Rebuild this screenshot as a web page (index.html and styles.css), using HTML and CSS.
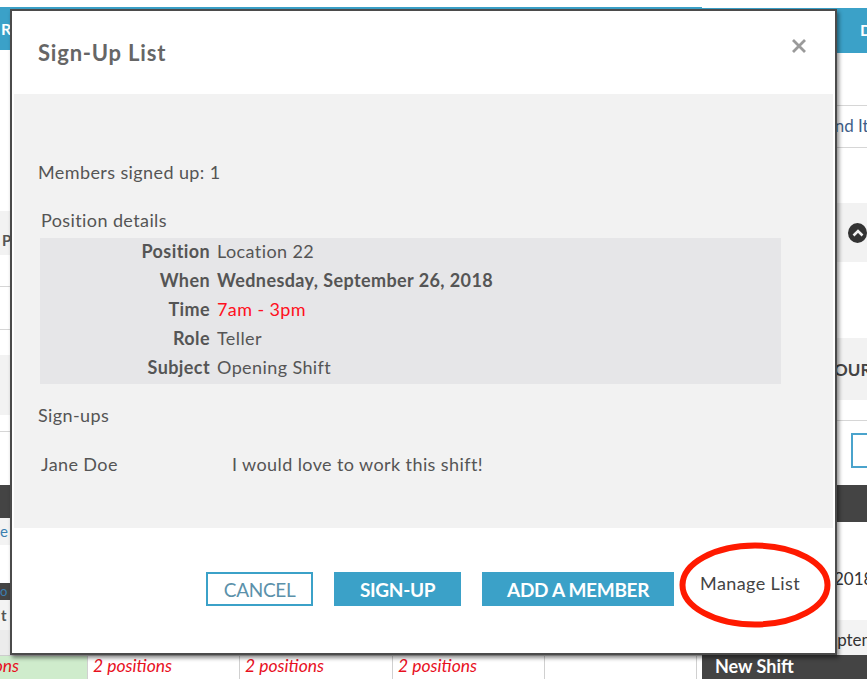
FILE: index.html
```html
<!DOCTYPE html>
<html lang="en">
<head>
<meta charset="utf-8">
<title>Sign-Up List</title>
<link rel="stylesheet" href="styles.css">
</head>
<body>
<div class="page">
  <div class="main">
    <div class="band white h7"></div>
    <div class="band topbar h43"><span class="tb-text">R</span></div>
    <div class="band white h161"></div>
    <div class="band grey h44 txt-dark">P</div>
    <div class="band white h31 line"></div>
    <div class="band white h42 line"></div>
    <div class="band white h25"></div>
    <div class="band grey h60"></div>
    <div class="band white h16 line"></div>
    <div class="band white h53"></div>
    <div class="band dark h33"></div>
    <div class="band light h27 txt-blue">e</div>
    <div class="band white h38"></div>
    <div class="band dark h17 txt-blue small">o</div>
    <div class="band light h30 txt-dark">t</div>
    <div class="band greyish h25"></div>
    <div class="calendar">
      <div class="cal-cell green">2 positions</div>
      <div class="cal-cell">2 positions</div>
      <div class="cal-cell">2 positions</div>
      <div class="cal-cell">2 positions</div>
      <div class="cal-cell"></div>
    </div>
  </div>
  <div class="side">
    <div class="band white h8"></div>
    <div class="band topbar h45"><span class="tb-right">D</span></div>
    <div class="band white h52 line"></div>
    <div class="band white h41 line side-text">Find Items</div>
    <div class="band white h55"></div>
    <div class="band grey h59 icon-row"><span class="circle-icon"><svg width="12" height="8" viewBox="0 0 12 8"><path d="M1.5 6.5 L6 2 L10.5 6.5" fill="none" stroke="#f2f2f2" stroke-width="2.6"/></svg></span></div>
    <div class="band white h76"></div>
    <div class="band grey h62 side-text bold">HOURS</div>
    <div class="band white h20 line"></div>
    <div class="band white h64 input-row"><span class="input-box"></span></div>
    <div class="band dark h37"></div>
    <div class="band white h98 side-date">Sep 26, 2018</div>
    <div class="band light h35 side-sept">September</div>
    <div class="band dark h24 new-shift">New Shift</div>
  </div>
</div>

<div class="modal">
  <div class="modal-header">
    <h2 class="modal-title">Sign-Up List</h2>
    <span class="close"><svg width="16" height="16" viewBox="0 0 16 16"><path d="M2 2 L14 14 M14 2 L2 14" stroke="#9a9a9a" stroke-width="2.8" fill="none"/></svg></span>
  </div>
  <div class="modal-body">
    <p class="count">Members signed up: 1</p>
    <p class="section-title indent">Position details</p>
    <div class="details">
      <div class="d-row"><span class="d-label">Position</span><span class="d-value">Location 22</span></div>
      <div class="d-row"><span class="d-label">When</span><span class="d-value strong">Wednesday, September 26, 2018</span></div>
      <div class="d-row"><span class="d-label">Time</span><span class="d-value red">7am - 3pm</span></div>
      <div class="d-row"><span class="d-label">Role</span><span class="d-value">Teller</span></div>
      <div class="d-row"><span class="d-label">Subject</span><span class="d-value">Opening Shift</span></div>
    </div>
    <p class="section-title signups">Sign-ups</p>
    <div class="signup-row"><span class="su-name">Jane Doe</span><span class="su-msg">I would love to work this shift!</span></div>
  </div>
  <div class="modal-footer">
    <button class="btn btn-outline">CANCEL</button>
    <button class="btn btn-solid">SIGN-UP</button>
    <button class="btn btn-solid wide">ADD A MEMBER</button>
    <a class="manage">Manage List</a>
  </div>
</div>

<svg class="annotation" width="160" height="92" viewBox="0 0 160 92"><ellipse cx="79" cy="46" rx="72.5" ry="39.5" fill="none" stroke="#ff1a00" stroke-width="6"/></svg>
</body>
</html>
```

FILE: styles.css
```css
* { box-sizing: border-box; }
html, body { margin: 0; padding: 0; }
body {
  width: 867px;
  height: 679px;
  overflow: hidden;
  position: relative;
  font-family: Lato, "Open Sans", sans-serif;
  color: #555;
  background: #fff;
}

.page {
  display: grid;
  grid-template-columns: 702px 165px;
  height: 679px;
}
.main, .side { display: flex; flex-direction: column; overflow: hidden; }

.band { flex: none; font-size: 15px; white-space: nowrap; }
.white { background: #fff; }
.grey { background: #f2f2f2; }
.greyish { background: #ececec; }
.light { background: #f3f3f3; }
.dark { background: #444; }
.topbar { background: #3ba1c8; color: #fff; font-weight: 700; font-size: 16px; }
.line { border-bottom: 1px solid #d6d6d6; }
.h7 { height: 7px; } .h8 { height: 8px; } .h16 { height: 17px; } .h17 { height: 17px; }
.h20 { height: 21px; } .h24 { height: 24px; } .h25 { height: 25px; } .h27 { height: 27px; }
.h30 { height: 30px; } .h31 { height: 32px; } .h33 { height: 33px; } .h35 { height: 35px; }
.h37 { height: 37px; } .h38 { height: 38px; } .h41 { height: 42px; } .h42 { height: 43px; }
.h43 { height: 43px; } .h44 { height: 44px; } .h45 { height: 45px; } .h52 { height: 53px; }
.h53 { height: 53px; } .h55 { height: 55px; } .h59 { height: 59px; } .h60 { height: 60px; }
.h62 { height: 62px; } .h64 { height: 64px; } .h76 { height: 76px; } .h98 { height: 98px; }
.h161 { height: 161px; }

.tb-text { display: block; padding: 12px 0 0 1px; }
.tb-right { display: block; padding: 12px 0 0 158px; }
.txt-dark { color: #555; font-weight: 700; padding: 20px 0 0 2px; }
.txt-blue { color: #3b7fb0; padding: 4px 0 0 0; }
.small { font-size: 13px; padding: 0; line-height: 17px; }
.h30.txt-dark { padding: 6px 0 0 1px; }

.calendar {
  display: grid;
  grid-template-columns: 153px 152px 153px 152px 152px;
  margin-left: -65px;
  height: 24px;
  border-top: 1px solid #ccc;
}
.cal-cell {
  border-right: 1px solid #d0d0d0;
  color: #e8101e;
  font-style: italic;
  font-size: 17.5px;
  line-height: 20px;
  padding: 0 0 0 5px;
  background: #fff;
  white-space: nowrap;
}
.green { background: #cfeccc; }

.side-text { padding: 9px 0 0 119px; color: #3f5f8a; font-size: 17px; }
.side-text.bold { color: #444; font-weight: 700; padding-top: 21px; }
.icon-row { display: flex; align-items: center; padding-left: 146px; }
.circle-icon {
  width: 20px; height: 20px; border-radius: 50%;
  background: #333;
  display: flex; align-items: center; justify-content: center;
}
.input-row { padding: 12px 0 0 149px; }
.input-box { display: block; width: 40px; height: 35px; border: 2px solid #4aa3cc; background: #fff; }
.side-date { padding: 46px 0 0 72px; color: #333; font-size: 17px; }
.side-sept { padding: 9px 0 0 117px; color: #333; font-size: 17px; }
.new-shift { color: #fff; font-weight: 700; font-size: 18px; padding: 0 0 0 13px; line-height: 22px; }

/* modal */
.modal {
  position: absolute;
  left: 10px;
  top: 9px;
  width: 827px;
  height: 646px;
  background: #fff;
  border: 2px solid #4b4b4b;
  box-shadow: 2px 3px 4px rgba(0,0,0,0.45);
  display: flex;
  flex-direction: column;
}
.modal-header {
  height: 83px;
  display: flex;
  align-items: center;
  justify-content: space-between;
  padding: 0 28px 0 26px;
  flex: none;
}
.modal-title {
  margin: 0;
  font-size: 22px;
  font-weight: 700;
  color: #666;
  letter-spacing: 0.8px;
}
.close { display: flex; margin-bottom: 13px; }

.modal-body {
  background: #f2f2f2;
  margin: 0 2px;
  height: 434px;
  flex: none;
  padding: 68px 0 0 24px;
}
.modal-body p { margin: 0; }
.count, .section-title, .su-name, .su-msg, .d-row {
  font-size: 18px;
  letter-spacing: 0.4px;
  line-height: 20px;
  color: #555;
}
.section-title.indent { margin: 28px 0 0 3px; }
.details {
  margin: 8px 0 0 2px;
  width: 741px;
  background: #e6e6e8;
}
.d-row { display: flex; height: 29px; align-items: center; padding-bottom: 4px; }
.details .d-row:last-child { height: 30px; }
.d-label { width: 170px; text-align: right; font-weight: 700; color: #555; }
.d-value { margin-left: 7px; }
.strong { font-weight: 700; }
.red { color: #ff1020; }
.modal-body .signups { margin-top: 21px; }
.signup-row { display: flex; margin: 29px 0 0 3px; }
.su-name { width: 191px; }

.modal-footer {
  flex: 1;
  display: flex;
  align-items: flex-start;
  justify-content: flex-end;
  padding: 44px 35px 0 0;
  gap: 21px;
}
.btn {
  font-family: Lato, sans-serif;
  font-size: 19px;
  font-weight: 700;
  letter-spacing: -0.3px;
  height: 34px;
  border: none;
  padding: 0;
  cursor: pointer;
}
.btn-outline {
  width: 107px;
  background: #fff;
  border: 2px solid #3ba1c8;
  color: #5b91aa;
  font-weight: 400;
}
.btn-solid { width: 127px; background: #3ba1c8; color: #fff; }
.btn-solid.wide { width: 192px; }
.manage {
  font-size: 18px;
  letter-spacing: 0.4px;
  line-height: 22px;
  color: #444;
  margin-left: 5px;
}

.annotation {
  position: absolute;
  left: 676px;
  top: 539px;
}
```
